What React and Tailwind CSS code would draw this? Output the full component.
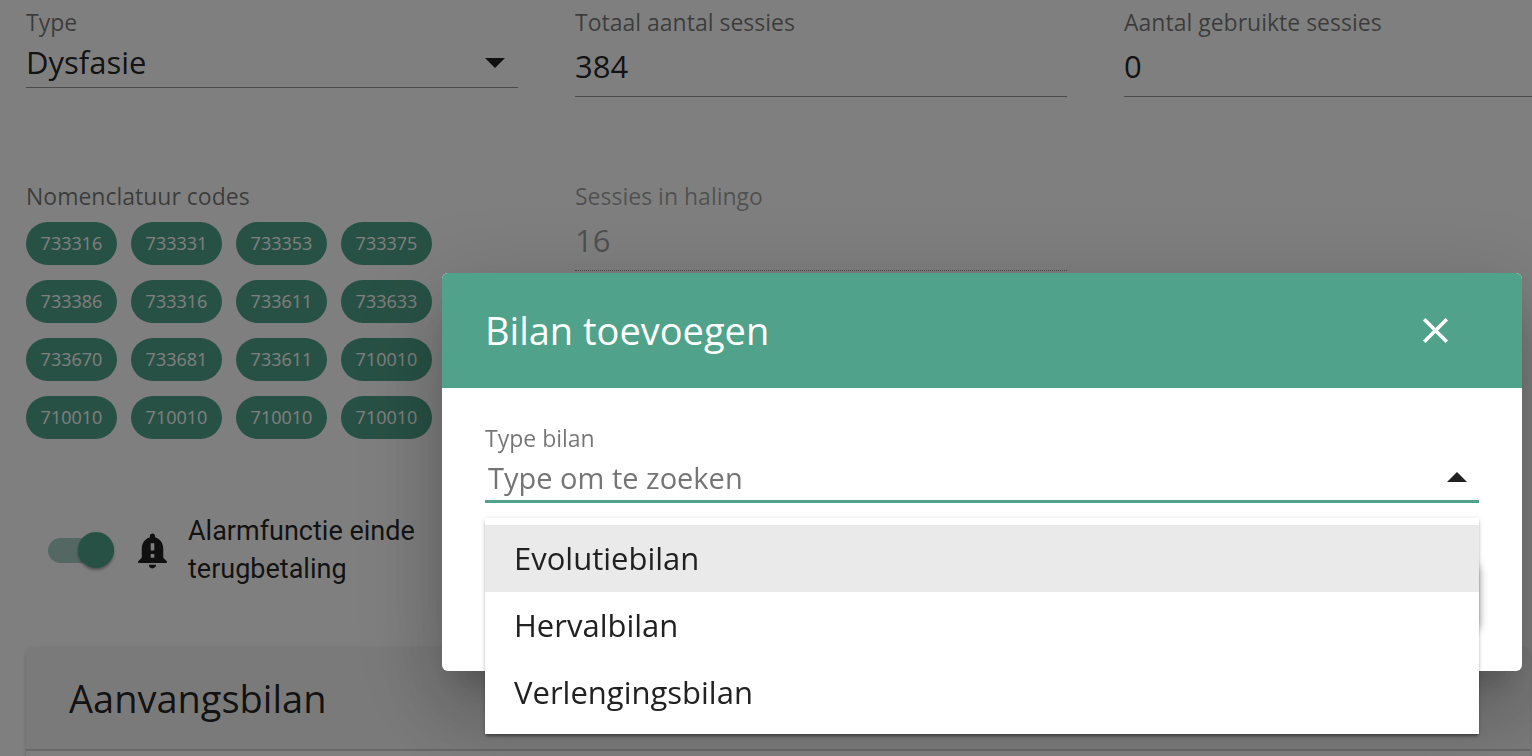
import { useState } from "react";
import { MdClose, MdNotificationImportant } from "react-icons/md";

const codes = [
  "733316", "733331", "733353", "733375",
  "733386", "733316", "733611", "733633",
  "733670", "733681", "733611", "710010",
  "710010", "710010", "710010", "710010",
];

const bilanTypes = ["Evolutiebilan", "Hervalbilan", "Verlengingsbilan"];

function Caret({ className }) {
  return (
    <svg viewBox="0 0 20 10" className={className} aria-hidden="true">
      <path d="M0 0h20L10 10z" fill="currentColor" />
    </svg>
  );
}

function NumberField({ id, label, value, disabled }) {
  return (
    <div className="flex flex-col">
      <label
        htmlFor={id}
        className={disabled ? "text-[23px] leading-[30px] text-black/38" : "text-[23px] leading-[30px] text-black/54"}
      >
        {label}
      </label>
      <input
        id={id}
        type="text"
        defaultValue={value}
        disabled={disabled}
        className="h-[60px] w-full border-b border-black/42 pb-0.5 text-[31px] text-black/87 outline-none disabled:border-dotted disabled:text-black/38"
      />
    </div>
  );
}

// Schakelaar voor de alarmfunctie
function AlarmSwitch() {
  const [actief, setActief] = useState(true);

  return (
    <label className="mt-[73px] flex items-center pl-[22px]">
      <input
        type="checkbox"
        role="switch"
        checked={actief}
        onChange={(e) => setActief(e.target.checked)}
        className="peer sr-only"
      />
      <span className="flex h-[25px] w-[66px] shrink-0 items-center justify-start rounded-full bg-gray-300 pr-1 peer-checked:justify-end peer-checked:bg-[#a7d1c4] peer-checked:pr-0">
        <span className="size-9 rounded-full bg-[#50a38a] shadow-[0_2px_3px_rgba(0,0,0,0.35)]" />
      </span>
      <MdNotificationImportant className="ml-[17px] size-[43px] shrink-0 text-black/87" />
      <span className="ml-[14px] font-[Roboto,sans-serif] text-[27px] leading-[38px] text-black/87">
        Alarmfunctie einde terugbetaling
      </span>
    </label>
  );
}

function BilanDialog() {
  const [zoek, setZoek] = useState("");

  return (
    <div className="fixed inset-0 flex items-start justify-end bg-black/50 pt-[273px] pr-[10px]">
      <div
        role="dialog"
        aria-labelledby="dialog-title"
        className="w-full max-w-[1080px] rounded-md bg-white shadow-[0_22px_30px_-14px_rgba(0,0,0,0.2),0_48px_76px_6px_rgba(0,0,0,0.14),0_18px_92px_16px_rgba(0,0,0,0.12)]"
      >
        <header className="flex h-[115px] items-center justify-between rounded-t-md bg-[#50a38a] pr-[65px] pl-[43px] text-white">
          <h2 id="dialog-title" className="text-[38px] font-medium">
            Bilan toevoegen
          </h2>
          <button type="button" aria-label="Sluiten">
            <MdClose className="size-[43px]" />
          </button>
        </header>

        <div className="flex flex-col px-[43px] pt-[34px] pb-[43px]">
          <div className="relative flex flex-col">
            <label htmlFor="bilan" className="text-[23px] leading-8 text-black/54">
              Type bilan
            </label>
            <div className="flex h-[49px] items-center border-b-3 border-[#50a38a] pr-3">
              <input
                id="bilan"
                type="text"
                role="combobox"
                aria-expanded="true"
                aria-controls="bilan-opties"
                placeholder="Type om te zoeken"
                value={zoek}
                onChange={(e) => setZoek(e.target.value)}
                className="min-w-0 flex-1 pt-0.5 pl-[3px] text-[29px] text-black/87 outline-none placeholder:text-[#757575]"
              />
              <Caret className="h-[10px] w-5 rotate-180 text-[#212121]" />
            </div>

            <ul
              id="bilan-opties"
              role="listbox"
              className="absolute inset-x-0 top-full z-10 mt-[15px] bg-white pt-[7px] pb-2 shadow-[0_3px_3px_-1px_rgba(0,0,0,0.4),0_1px_5px_rgba(0,0,0,0.15)]"
            >
              {bilanTypes.map((type, i) => (
                <li
                  key={type}
                  role="option"
                  aria-selected={i === 0}
                  className="flex h-[67px] items-center px-[29px] text-[31px] text-[#212121] aria-selected:bg-[#eaeaea]"
                >
                  {type}
                </li>
              ))}
            </ul>
          </div>

          <button
            type="button"
            aria-label="Opslaan"
            className="mt-[60px] h-[65px] w-[180px] self-end rounded-md bg-white shadow-[0_2px_10px_rgba(0,0,0,0.4)]"
          />
        </div>
      </div>
    </div>
  );
}

export default function App() {
  return (
    <div className="h-screen overflow-hidden bg-white font-['Open_Sans',sans-serif]">
      <main className="pt-[7px] pr-[2px] pl-[26px]">
        <div className="-mr-[86px] grid grid-cols-3 gap-x-[57px] gap-y-[84px]">
          <div className="flex flex-col">
            <label htmlFor="type" className="text-[23px] leading-[30px] text-black/54">
              Type
            </label>
            <div className="relative">
              <select
                id="type"
                className="h-[51px] w-full appearance-none border-b border-black/42 text-[31px] text-black/87 outline-none"
              >
                <option>Dysfasie</option>
              </select>
              <Caret className="pointer-events-none absolute top-[21px] right-[13px] h-[10px] w-5 text-black/87" />
            </div>
          </div>
          <NumberField id="totaal" label="Totaal aantal sessies" value="384" />
          <NumberField id="gebruikt" label="Aantal gebruikte sessies" value="0" />

          <div>
            <h3 className="text-[23px] leading-[30px] text-black/54">Nomenclatuur codes</h3>
            <ul className="mt-[11px] flex flex-wrap gap-x-[14px] gap-y-[15px]">
              {codes.map((code, i) => (
                <li
                  key={i}
                  className="flex h-[43px] w-[91px] items-center justify-center rounded-full bg-[#50a38a] pb-0.5 text-lg text-white"
                >
                  {code}
                </li>
              ))}
            </ul>
            <AlarmSwitch />
          </div>
          <NumberField id="halingo" label="Sessies in halingo" value="16" disabled />
        </div>

        <section className="mt-[60px] rounded-lg bg-white shadow-[0_1px_4px_rgba(0,0,0,0.2)]">
          <h2 className="flex h-[103px] items-center rounded-t-lg border-b-2 border-black/15 bg-[#f5f5f5] px-[43px] text-[38px] text-black/87">
            Aanvangsbilan
          </h2>
          <div className="h-40" />
        </section>
      </main>

      <BilanDialog />
    </div>
  );
}
